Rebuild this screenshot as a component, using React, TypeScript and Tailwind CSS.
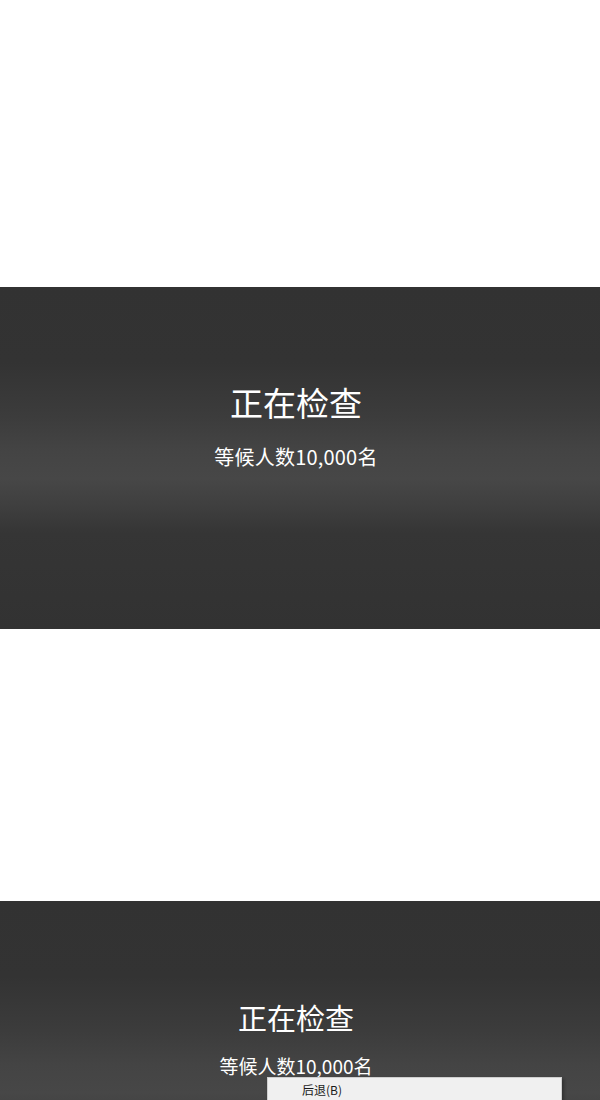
import React from "react";

const font = { fontFamily: '"Noto Sans CJK SC", "Noto Sans", sans-serif' };

function WaitPanel({
  titleClass,
  subClass,
  children,
}: {
  titleClass: string;
  subClass: string;
  children?: React.ReactNode;
}) {
  return (
    <div
      className="relative w-full h-[342px] shrink-0 bg-[linear-gradient(180deg,#323232_0%,#333333_22%,#3c3c3c_38%,#444444_48%,#474747_56%,#3f3f3f_64%,#353535_72%,#323232_100%)] text-white flex flex-col items-center pr-[8px]"
      style={font}
    >
      <div className={titleClass}>正在检查</div>
      <div className={subClass}>等候人数10,000名</div>
      {children}
    </div>
  );
}

export default function App() {
  return (
    <div className="w-[600px] h-[1100px] overflow-hidden bg-white flex flex-col">
      <div className="h-[287px] shrink-0 bg-white" />
      <WaitPanel
        titleClass="mt-[95px] text-[33px] leading-[40px]"
        subClass="mt-[22px] text-[20px] leading-[26px] tracking-[0.2px]"
      />
      <div className="h-[272px] shrink-0 bg-white" />
      <WaitPanel
        titleClass="mt-[98px] text-[29px] leading-[36px]"
        subClass="mt-[19px] text-[19px] leading-[24px]"
      >
        <div className="absolute left-[267px] top-[176px] w-[295px] h-[40px] bg-[#f0f0f0] border border-[#cfcfcf] shadow-[2px_2px_3px_rgba(0,0,0,0.3)]">
          <div className="pl-[34px] pt-[4px] text-[12px] leading-[16px] text-[#1a1a1a]">后退(B)</div>
        </div>
      </WaitPanel>
    </div>
  );
}
